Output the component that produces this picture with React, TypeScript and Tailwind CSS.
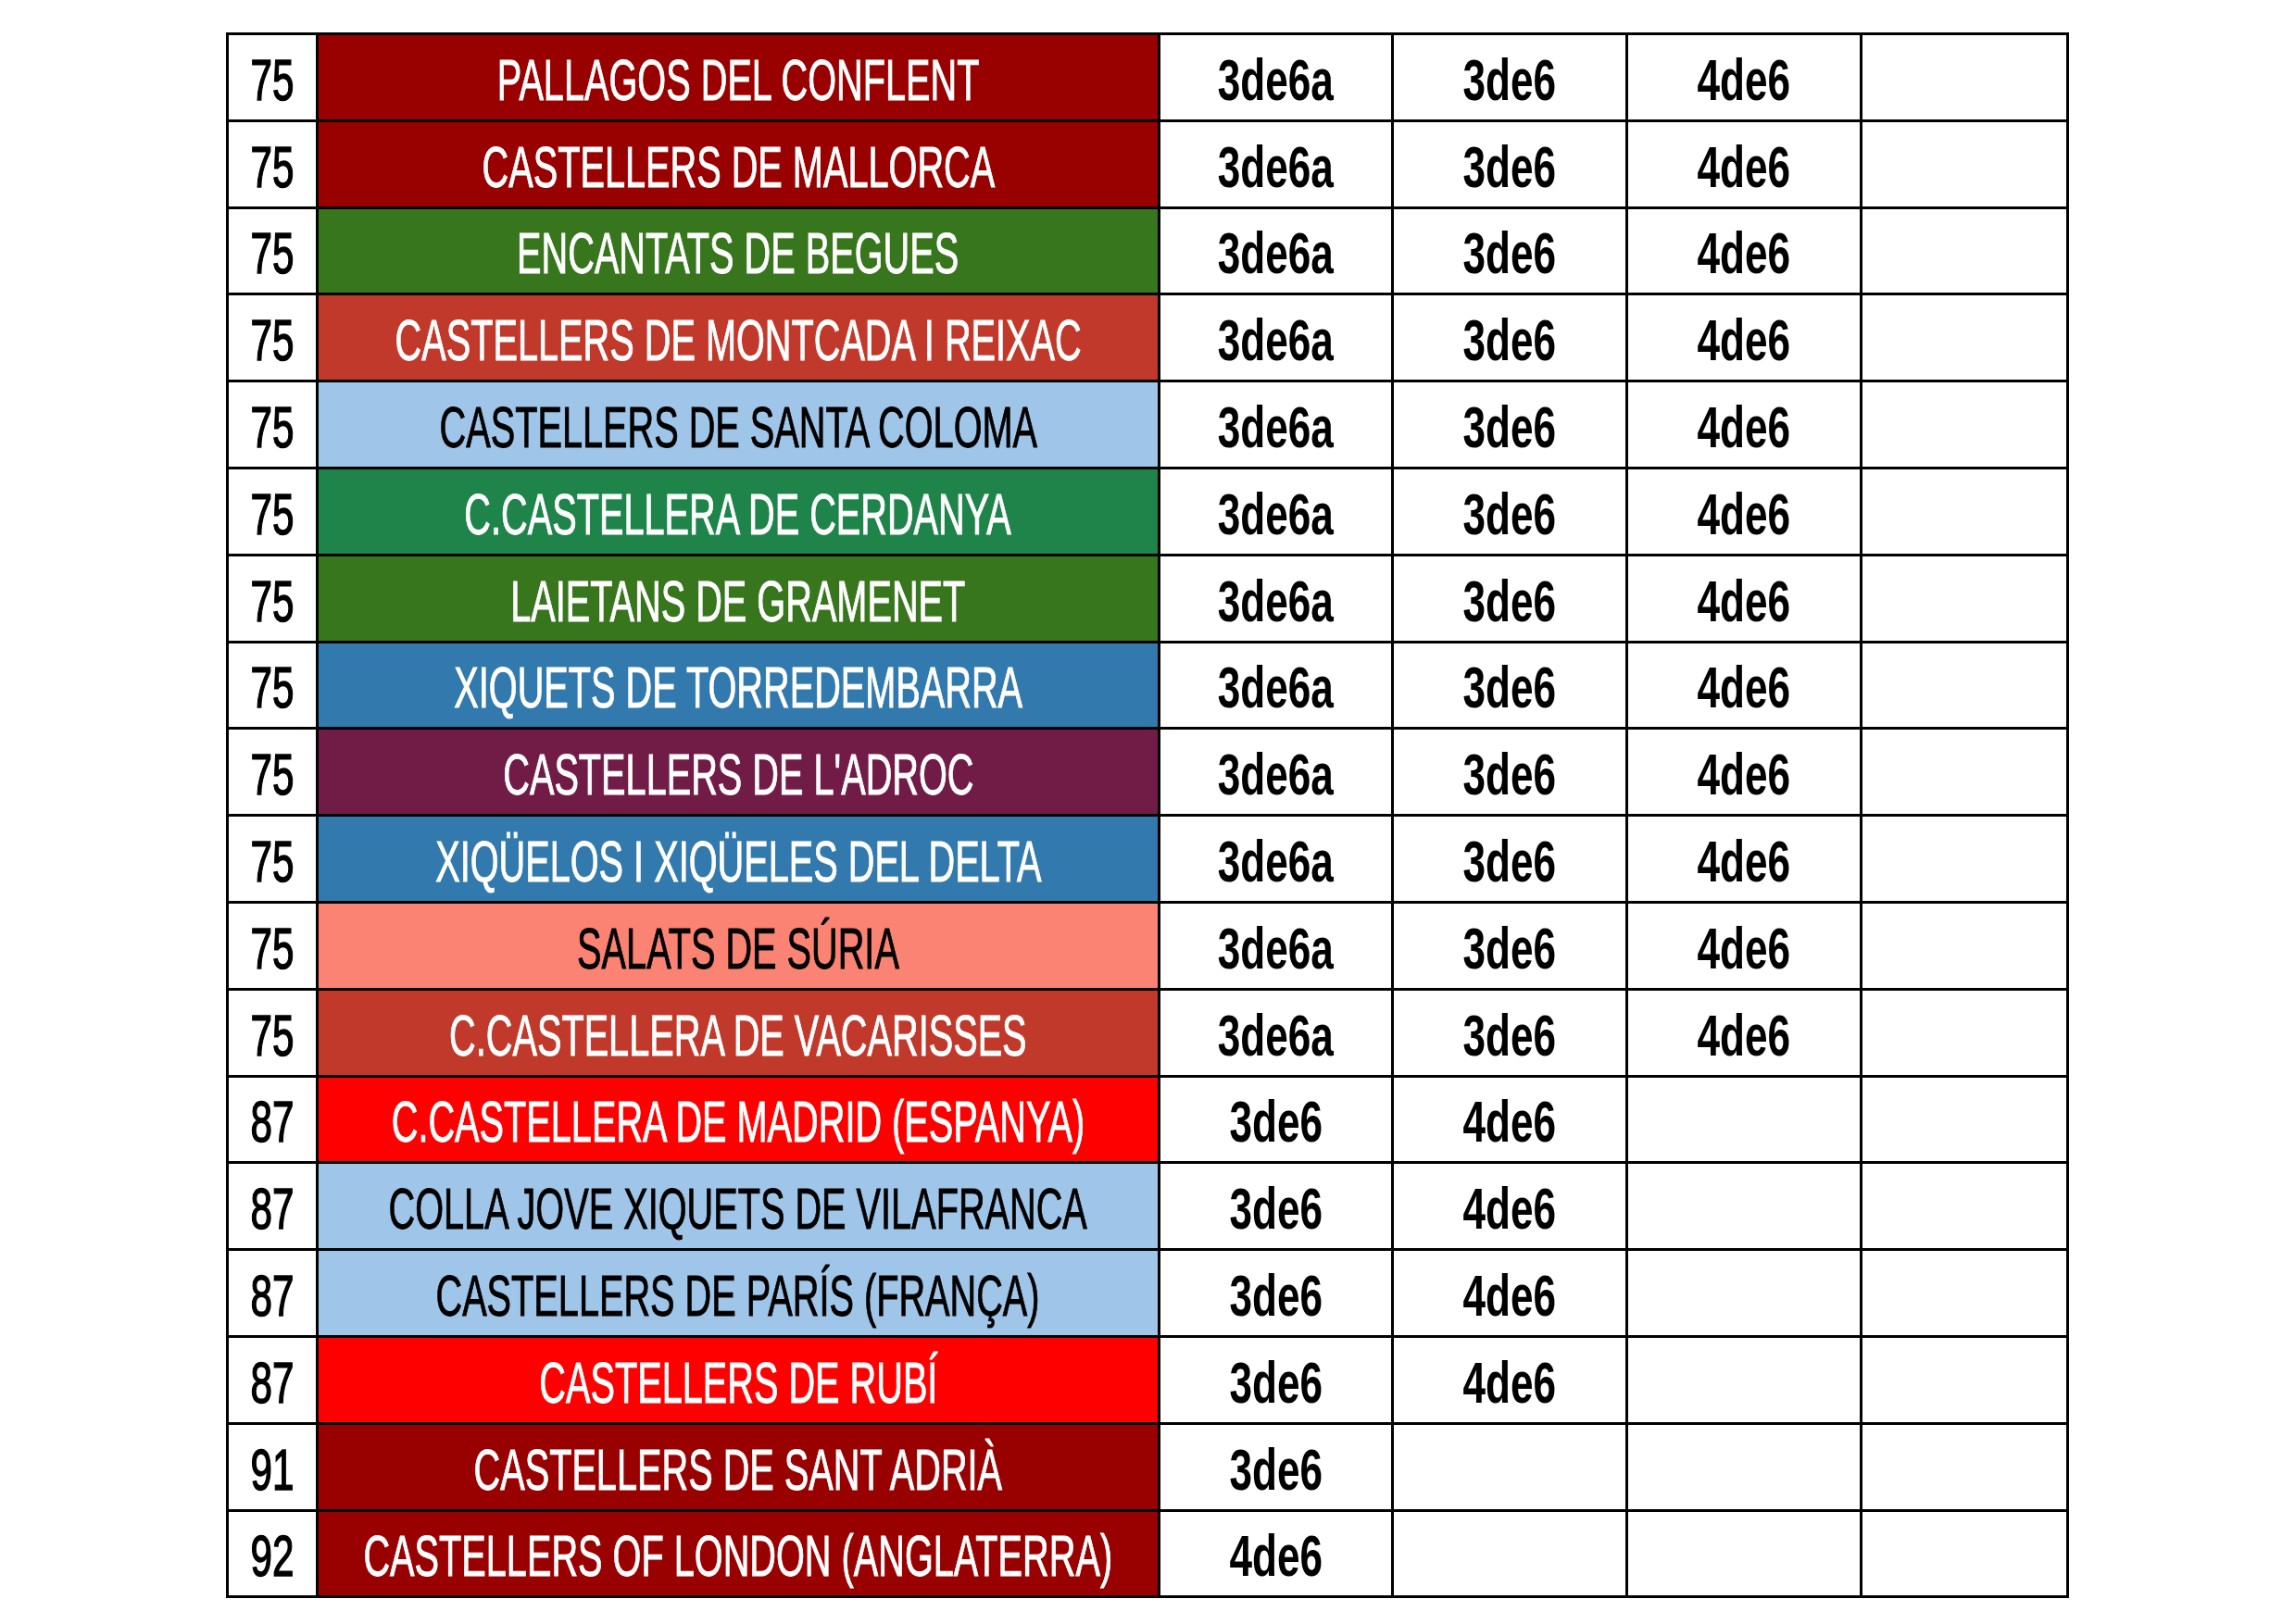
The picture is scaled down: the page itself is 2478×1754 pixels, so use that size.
import React from 'react';

interface IRow {
  pos: number;
  name: string;
  bg: string;
  dark: boolean;
  values: string[];
}

const rows: IRow[] = [
  { pos: 75, name: 'PALLAGOS DEL CONFLENT', bg: 'bg-[#990000]', dark: false, values: ['3de6a', '3de6', '4de6'] },
  { pos: 75, name: 'CASTELLERS DE MALLORCA', bg: 'bg-[#990000]', dark: false, values: ['3de6a', '3de6', '4de6'] },
  { pos: 75, name: 'ENCANTATS DE BEGUES', bg: 'bg-[#38761d]', dark: false, values: ['3de6a', '3de6', '4de6'] },
  { pos: 75, name: 'CASTELLERS DE MONTCADA I REIXAC', bg: 'bg-[#c1392b]', dark: false, values: ['3de6a', '3de6', '4de6'] },
  { pos: 75, name: 'CASTELLERS DE SANTA COLOMA', bg: 'bg-[#9fc5e8]', dark: true, values: ['3de6a', '3de6', '4de6'] },
  { pos: 75, name: 'C.CASTELLERA DE CERDANYA', bg: 'bg-[#1f844a]', dark: false, values: ['3de6a', '3de6', '4de6'] },
  { pos: 75, name: 'LAIETANS DE GRAMENET', bg: 'bg-[#38761d]', dark: false, values: ['3de6a', '3de6', '4de6'] },
  { pos: 75, name: 'XIQUETS DE TORREDEMBARRA', bg: 'bg-[#3279ad]', dark: false, values: ['3de6a', '3de6', '4de6'] },
  { pos: 75, name: "CASTELLERS DE L'ADROC", bg: 'bg-[#711c46]', dark: false, values: ['3de6a', '3de6', '4de6'] },
  { pos: 75, name: 'XIQÜELOS I XIQÜELES DEL DELTA', bg: 'bg-[#3279ad]', dark: false, values: ['3de6a', '3de6', '4de6'] },
  { pos: 75, name: 'SALATS DE SÚRIA', bg: 'bg-[#fa8373]', dark: true, values: ['3de6a', '3de6', '4de6'] },
  { pos: 75, name: 'C.CASTELLERA DE VACARISSES', bg: 'bg-[#c1392b]', dark: false, values: ['3de6a', '3de6', '4de6'] },
  { pos: 87, name: 'C.CASTELLERA DE MADRID (ESPANYA)', bg: 'bg-[#ff0000]', dark: false, values: ['3de6', '4de6', ''] },
  { pos: 87, name: 'COLLA JOVE XIQUETS DE VILAFRANCA', bg: 'bg-[#9fc5e8]', dark: true, values: ['3de6', '4de6', ''] },
  { pos: 87, name: 'CASTELLERS DE PARÍS (FRANÇA)', bg: 'bg-[#9fc5e8]', dark: true, values: ['3de6', '4de6', ''] },
  { pos: 87, name: 'CASTELLERS DE RUBÍ', bg: 'bg-[#ff0000]', dark: false, values: ['3de6', '4de6', ''] },
  { pos: 91, name: 'CASTELLERS DE SANT ADRIÀ', bg: 'bg-[#990000]', dark: false, values: ['3de6', '', ''] },
  { pos: 92, name: 'CASTELLERS OF LONDON (ANGLATERRA)', bg: 'bg-[#990000]', dark: false, values: ['4de6', '', ''] },
];

// grid cell: right + bottom rule, the container draws the top + left ones
const cell = 'flex items-center justify-center border-r-[3px] border-b-[3px] border-black pt-[6px] overflow-hidden';

const App: React.FC = () => {
  return (
    <div className="min-h-screen bg-white pt-[35px] font-['Liberation_Sans',Arial,sans-serif]">
      <div className="mx-auto grid w-[1990px] grid-cols-[97px_909px_252px_253px_253px_223px] auto-rows-[93.8px] border-l-[3px] border-t-[3px] border-black">
        {rows.map((row, i) => (
          <React.Fragment key={i}>
            <div className={`${cell} bg-white text-black`}>
              <span className="inline-block shrink-0 scale-x-[0.67] whitespace-nowrap text-[63px] leading-none [-webkit-text-stroke:1.5px_currentColor]">
                {row.pos}
              </span>
            </div>
            <div className={`${cell} ${row.bg} ${row.dark ? 'text-black' : 'text-white'}`}>
              <span className="inline-block shrink-0 scale-x-[0.63] whitespace-nowrap text-[63px] leading-none [-webkit-text-stroke:1px_currentColor]">
                {row.name}
              </span>
            </div>
            {row.values.map((v, j) => (
              <div key={j} className={`${cell} bg-white text-black`}>
                <span className="inline-block shrink-0 scale-x-[0.7] whitespace-nowrap text-[63px] font-bold leading-none">{v}</span>
              </div>
            ))}
            <div className={`${cell} bg-white`} />
          </React.Fragment>
        ))}
      </div>
    </div>
  );
};

export default App;
